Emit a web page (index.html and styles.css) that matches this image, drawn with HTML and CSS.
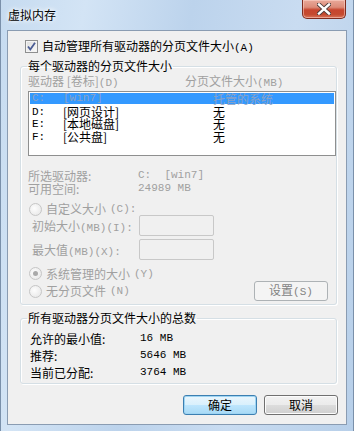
FILE: index.html
```html
<!DOCTYPE html>
<html lang="zh-CN">
<head>
    <meta charset="UTF-8">
    <title>虚拟内存</title>
    <link rel="stylesheet" href="styles.css">
</head>
<body>
    <div class="window">
        <div class="titlebar">
            <span class="title">虚拟内存</span>
            <button class="close-btn" aria-label="关闭">
                <svg width="14" height="12" viewBox="0 0 14 12">
                    <path d="M2 1.5 L12 10.5 M12 1.5 L2 10.5" stroke="#4a3a38" stroke-width="4.2" stroke-linecap="square"/>
                    <path d="M2 1.5 L12 10.5 M12 1.5 L2 10.5" stroke="#fff" stroke-width="2.4" stroke-linecap="square"/>
                </svg>
            </button>
        </div>

        <div class="client">
            <div class="check-row">
                <span class="checkbox">
                    <svg width="11" height="11" viewBox="0 0 11 11">
                        <path d="M2 5.5 L4.3 8.5 L9 1.8" fill="none" stroke="#4a5c94" stroke-width="1.8"/>
                    </svg>
                </span>
                <span>自动管理所有驱动器的分页文件大小<span class="lat">(A)</span></span>
            </div>

            <fieldset class="group group-drives">
                <legend>每个驱动器的分页文件大小</legend>
                <div class="list-head dim">
                    <span>驱动器 [卷标]<span class="lat">(D)</span></span>
                    <span>分页文件大小<span class="lat">(MB)</span></span>
                </div>
                <ul class="drive-list">
                    <li class="selected"><span class="lat">C:</span><span class="lat">[win7]</span><span>托管的系统</span></li>
                    <li><span class="lat">D:</span><span>[网页设计]</span><span>无</span></li>
                    <li><span class="lat">E:</span><span>[本地磁盘]</span><span>无</span></li>
                    <li><span class="lat">F:</span><span>[公共盘]</span><span>无</span></li>
                </ul>

                <div class="info dim">
                    <div class="info-row"><span class="info-label">所选驱动器:</span><span class="lat">C:  [win7]</span></div>
                    <div class="info-row"><span class="info-label">可用空间:</span><span class="lat">24989 MB</span></div>
                </div>

                <div class="radio-row custom dim"><span class="radio"></span>自定义大小<span class="lat">(C):</span></div>
                <div class="field-row dim"><span class="field-label">初始大小<span class="lat">(MB)(I):</span></span><span class="textbox"></span></div>
                <div class="field-row second dim"><span class="field-label">最大值<span class="lat">(MB)(X):</span></span><span class="textbox"></span></div>

                <div class="radio-row managed dim"><span class="radio checked"></span>系统管理的大小<span class="lat">(Y)</span></div>
                <div class="radio-row last dim">
                    <span class="radio-label"><span class="radio"></span>无分页文件<span class="lat">(N)</span></span>
                    <button class="btn disabled">设置<span class="lat">(S)</span></button>
                </div>
            </fieldset>

            <fieldset class="group group-total">
                <legend>所有驱动器分页文件大小的总数</legend>
                <div class="total-row"><span class="info-label">允许的最小值:</span><span class="lat">16 MB</span></div>
                <div class="total-row"><span class="info-label">推荐:</span><span class="lat">5646 MB</span></div>
                <div class="total-row"><span class="info-label">当前已分配:</span><span class="lat">3764 MB</span></div>
            </fieldset>

            <div class="actions">
                <button class="btn default">确定</button>
                <button class="btn">取消</button>
            </div>
        </div>
    </div>
</body>
</html>
```

FILE: styles.css
```css
body {
    margin: 0;
    font-family: "Noto Sans CJK SC", "DejaVu Sans", sans-serif;
    font-size: 12px;
    color: #000;
}

.lat {
    font-family: "Liberation Mono", "DejaVu Sans Mono", monospace;
    font-size: 11px;
    white-space: pre;
}

.window {
    width: 354px;
    height: 431px;
    overflow: hidden;
    background: linear-gradient(100deg, #c6dbf0 0%, #d3e4f5 20%, #bcd3ec 45%, #c9dcf1 70%, #b7cfe9 100%);
    box-shadow: inset 1px 0 0 #7a90aa, inset -1px 0 0 #7a90aa;
}

/* Title bar */
.titlebar {
    height: 30px;
    display: flex;
    justify-content: space-between;
    align-items: flex-start;
}

.title {
    padding: 9px 0 0 8px;
    line-height: 12px;
    text-shadow: 0 0 6px #fff, 0 0 4px #fff;
}

.close-btn {
    width: 44px;
    height: 19px;
    margin-right: 8px;
    padding: 0;
    border: 1px solid #7e2c1f;
    border-top: none;
    border-radius: 0 0 5px 5px;
    background: linear-gradient(#e9a99a 0%, #dc8c79 40%, #c7452e 55%, #c44a2f 80%, #d9745a 100%);
    box-shadow: inset 0 0 0 1px rgba(255, 220, 210, 0.5);
    display: flex;
    justify-content: center;
    align-items: center;
}

/* Client area */
.client {
    width: 338px;
    height: 393px;
    margin-left: 7px;
    border: 1px solid #8a9cb2;
    background-color: #f0f0f0;
    display: flex;
    flex-direction: column;
}

.check-row {
    display: flex;
    align-items: center;
    gap: 4px;
    height: 13px;
    margin: 9px 0 0 17px;
    line-height: 13px;
}

.checkbox {
    width: 11px;
    height: 11px;
    border: 1px solid #8e8f8f;
    background: linear-gradient(135deg, #dcdcdc, #fbfbfb);
    box-shadow: inset 0 0 0 1px #f4f4f4;
    display: flex;
}

.dim {
    color: #a0a0a0;
}

/* Group boxes */
.group {
    margin: 7px 9px 0 12px;
    padding: 0 0 3px 7px;
    border: 1px solid #d5dfe5;
    border-radius: 3px;
    min-inline-size: 0;
    box-shadow: inset 1px 1px 0 #fff, 1px 1px 0 #fff;
}

.group legend {
    padding: 0 1px;
    margin-left: -1px;
    line-height: 12px;
}

.list-head {
    display: grid;
    grid-template-columns: 157px 1fr;
    height: 13px;
    line-height: 13px;
    margin-top: 2px;
}

.drive-list {
    list-style: none;
    margin: 4px 0 0;
    padding: 1px;
    width: 304px;
    height: 61px;
    border: 1px solid #8e8f8f;
    background-color: #fff;
}

.drive-list li {
    display: grid;
    grid-template-columns: 31px 150px 1fr;
    height: 12.5px;
    line-height: 12px;
    padding-left: 2px;
}

.drive-list li.selected {
    height: 11px;
    line-height: 11px;
    margin-bottom: 1.5px;
    background-color: #3399ff;
    color: #8ca2c4;
}

.info {
    margin-top: 13px;
}

.info-row {
    display: grid;
    grid-template-columns: 110px 1fr;
    height: 13px;
    line-height: 13px;
}

.radio-row {
    display: flex;
    align-items: center;
    gap: 4px;
    height: 12px;
    line-height: 12px;
    padding-left: 1px;
}

.radio-row.custom {
    margin-top: 8px;
}

.radio-row.managed {
    height: 13px;
    margin-top: 7px;
}

.radio-row.last {
    height: 20px;
    margin-top: 1px;
    justify-content: space-between;
    padding-right: 8px;
}

.radio-label {
    display: flex;
    align-items: center;
    gap: 4px;
}

.radio {
    width: 11px;
    height: 11px;
    border: 1px solid #c6c6c6;
    border-radius: 50%;
    background: radial-gradient(circle at 40% 40%, #fdfdfd, #e4e4e4);
    display: flex;
    justify-content: center;
    align-items: center;
}

.radio.checked::after {
    content: "";
    width: 5px;
    height: 5px;
    border-radius: 50%;
    background-color: #a9a9a9;
}

.field-row {
    display: grid;
    grid-template-columns: 107px 75px;
    align-items: center;
    height: 21px;
    padding-left: 4px;
}

.field-row.second {
    margin-top: 3px;
}

.textbox {
    height: 19px;
    border: 1px solid #c8c8c8;
    border-radius: 2px;
    background-color: #f0f0f0;
}

/* Totals */
.group-total {
    padding-top: 6px;
    padding-bottom: 2px;
}

.total-row {
    display: grid;
    grid-template-columns: 110px 1fr;
    height: 17px;
    line-height: 17px;
    padding-left: 2px;
}

/* Buttons */
.btn {
    width: 74px;
    height: 20px;
    padding: 0;
    font-family: inherit;
    font-size: 12px;
    line-height: 16px;
    color: #000;
    border: 1px solid #707070;
    border-radius: 3px;
    background: linear-gradient(#f2f2f2 0%, #ebebeb 49%, #dddddd 50%, #cfcfcf 100%);
    box-shadow: inset 0 0 0 1px #fcfcfc;
}

.btn.default {
    border-color: #3c7fb1;
    background: linear-gradient(#eaf6fd 0%, #d9f0fc 49%, #bee6fd 50%, #a7d9f5 100%);
    box-shadow: inset 0 0 0 1px #9fd5f3;
}

.btn.disabled {
    color: #838383;
    border-color: #adb2b5;
    background: #f4f4f4;
    box-shadow: none;
}

.actions {
    display: flex;
    justify-content: flex-end;
    gap: 7px;
    margin: 11px 8px 0 0;
}
```
